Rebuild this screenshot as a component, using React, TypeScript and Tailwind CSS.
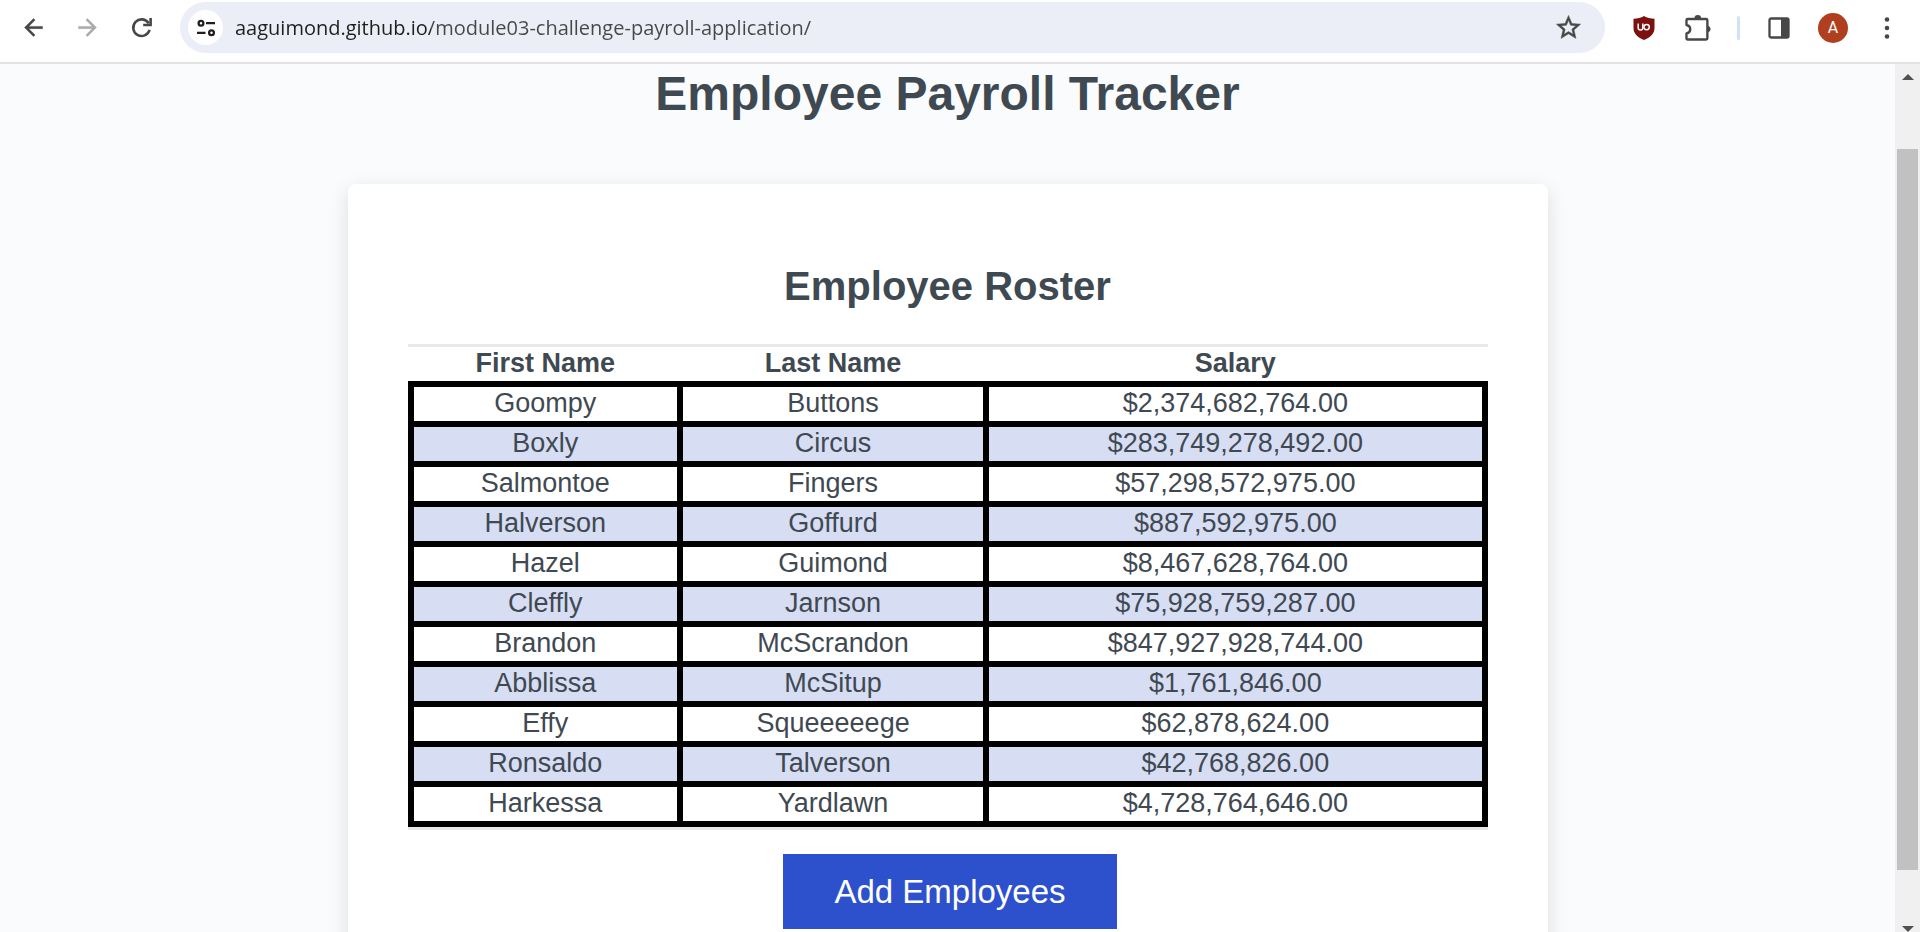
import type { ReactNode } from "react";

const employees = [
  ["Goompy", "Buttons", "$2,374,682,764.00"],
  ["Boxly", "Circus", "$283,749,278,492.00"],
  ["Salmontoe", "Fingers", "$57,298,572,975.00"],
  ["Halverson", "Goffurd", "$887,592,975.00"],
  ["Hazel", "Guimond", "$8,467,628,764.00"],
  ["Cleffly", "Jarnson", "$75,928,759,287.00"],
  ["Brandon", "McScrandon", "$847,927,928,744.00"],
  ["Abblissa", "McSitup", "$1,761,846.00"],
  ["Effy", "Squeeeeege", "$62,878,624.00"],
  ["Ronsaldo", "Talverson", "$42,768,826.00"],
  ["Harkessa", "Yardlawn", "$4,728,764,646.00"],
];

function ToolButton({ label, children }: { label: string; children: ReactNode }) {
  return (
    <button type="button" aria-label={label} className="flex h-12 w-[54px] shrink-0 items-center justify-center text-[#474747]">
      {children}
    </button>
  );
}

function Toolbar() {
  return (
    <header className="flex h-16 shrink-0 items-center border-b-2 border-[#e1e3e1] bg-white px-1.5 pb-[7px]">
      <ToolButton label="Back">
        <svg viewBox="0 0 24 24" className="size-[27px]" fill="currentColor" stroke="currentColor" strokeWidth="0.4">
          <path d="M20 11H7.83l5.59-5.59L12 4l-8 8 8 8 1.41-1.41L7.83 13H20z" />
        </svg>
      </ToolButton>
      <ToolButton label="Forward">
        <svg viewBox="0 0 24 24" className="size-[27px] text-[#ababab]" fill="currentColor" stroke="currentColor" strokeWidth="0.4">
          <path d="m12 4-1.41 1.41L16.17 11H4v2h12.17l-5.58 5.59L12 20l8-8z" />
        </svg>
      </ToolButton>
      <ToolButton label="Reload">
        <svg viewBox="0 0 24 24" className="size-[27px]" fill="none" stroke="currentColor" strokeWidth="2.3">
          <path d="M19.2 14.2A7.4 7.4 0 1 1 18.4 8.300" />
          <path d="M20.100 3.600V9.800h-6.600" />
        </svg>
      </ToolButton>

      <div className="ml-3 flex h-[51px] min-w-0 flex-1 items-center rounded-full bg-[#ebeef6] pl-2 pr-2.5">
        <button type="button" aria-label="View site information" className="flex size-[35px] shrink-0 items-center justify-center rounded-full bg-white">
          <svg viewBox="0 0 20 18" className="h-[18px] w-5" fill="none" stroke="#1f1f1f" strokeWidth="2.3">
            <circle cx="5" cy="4.2" r="2.4" />
            <path d="M10 4.2h9M1 13.8h8.500" />
            <circle cx="15.500" cy="13.800" r="2.400" />
          </svg>
        </button>
        <input
          type="text"
          aria-label="Address"
          defaultValue="aaguimond.github.io/module03-challenge-payroll-application/"
          className="ml-3 min-w-0 flex-1 bg-[linear-gradient(to_right,#1f1f1f_196px,#474747_196px)] bg-clip-text font-['Open_Sans','Noto_Sans',sans-serif] text-[20px] leading-7 text-transparent outline-none"
        />
        <ToolButton label="Bookmark this tab">
          <svg viewBox="0 0 24 24" className="size-[29px]" fill="currentColor" stroke="currentColor" strokeWidth="0.4">
            <path d="m22 9.24-7.19-.62L12 2 9.19 8.63 2 9.24l5.46 4.73L5.82 21 12 17.27 18.18 21l-1.63-7.03zM12 15.4l-3.76 2.27 1-4.28-3.32-2.88 4.38-.38L12 6.1l1.71 4.04 4.38.38-3.32 2.88 1 4.28z" />
          </svg>
        </ToolButton>
      </div>

      <div className="ml-3 flex items-center">
        <ToolButton label="uBlock Origin">
          <svg viewBox="0 0 22 24" className="h-6 w-[22px]">
            <path d="M11 0C8 2 4.500 2.700.5 2.700V12c0 6 4.500 9.500 10.500 12 6-2.500 10.500-6 10.500-12V2.700C17.500 2.700 14 2 11 0z" fill="#7b120f" />
            <g fill="none" stroke="#fff" strokeWidth="1.500">
              <path d="M5.200 7.500v4.300a2.300 2.300 0 0 0 4.600 0V7.500" />
              <circle cx="13.600" cy="11.100" r="2.700" />
            </g>
          </svg>
        </ToolButton>
        <ToolButton label="Extensions">
          <svg viewBox="0 0 26 26" className="size-7" fill="none" stroke="currentColor" strokeWidth="2.200" strokeLinejoin="round">
            <path d="M3.500 4.600H20.500q1.200 0 1.200 1.200V22.500q0 1.200-1.200 1.200H3.500q-1.200 0-1.200-1.200V18c2.400-.5 3.500-2 3.500-3.900S4.700 10.700 2.300 10.200V5.800q0-1.200 1.200-1.200z" />
            <path d="M9.700 4a3.100 3.100 0 0 1 6.200 0zM22.300 10.900a3.200 3.200 0 0 1 0 6.200z" fill="currentColor" stroke="none" />
          </svg>
        </ToolButton>
        <div className="mx-3 h-6 w-[3px] rounded-full bg-[#d3e0fb]" />
        <ToolButton label="Side panel">
          <svg viewBox="0 0 22 22" className="size-[22px]">
            <rect x="1.500" y="1.500" width="19" height="19" rx="1.500" fill="none" stroke="currentColor" strokeWidth="2.300" />
            <path d="M13 1h7.500v20H13z" fill="currentColor" />
          </svg>
        </ToolButton>
        <button type="button" aria-label="Profile" className="flex h-12 w-[54px] items-center justify-center">
          <span className="flex size-[30px] items-center justify-center rounded-full bg-[#b03f20] font-[Roboto,sans-serif] text-[16px] leading-none text-white">A</span>
        </button>
        <ToolButton label="Menu">
          <svg viewBox="0 0 6 24" className="h-6 w-1.5" fill="currentColor">
            <circle cx="3" cy="3.500" r="2.300" />
            <circle cx="3" cy="12" r="2.300" />
            <circle cx="3" cy="20.500" r="2.300" />
          </svg>
        </ToolButton>
      </div>
    </header>
  );
}

function Scrollbar() {
  return (
    <div className="flex w-[25px] shrink-0 flex-col items-center bg-[#f0f0f0]" aria-hidden="true">
      <svg viewBox="0 0 12 6" className="mt-2.5 h-1.5 w-3 shrink-0" fill="#505050">
        <path d="M6 0 12 6H0z" />
      </svg>
      <div className="mb-14 mt-[69px] w-[21px] flex-1 bg-[#c1c1c1]" />
      <svg viewBox="0 0 12 6" className="h-1.5 w-3 shrink-0" fill="#505050">
        <path d="M0 0h12L6 6z" />
      </svg>
    </div>
  );
}

export default function App() {
  return (
    <div className="flex h-screen flex-col overflow-hidden font-['Liberation_Sans',Arial,sans-serif] text-[#3f4952]">
      <Toolbar />
      <div className="flex min-h-0 flex-1">
        <main className="min-w-0 flex-1 overflow-hidden bg-[#fafbfd]">
          <h1 className="pt-1 text-center text-5xl font-bold leading-[52px]">Employee Payroll Tracker</h1>
          <section className="mx-auto mt-16 max-w-[1200px] rounded-lg bg-white px-[60px] pb-24 pt-[78px] shadow-[0_6px_20px_rgba(0,0,0,0.12)]">
            <h2 className="text-center text-[40px] font-bold leading-12">Employee Roster</h2>
            <div className="mt-[34px] border-y-[3px] border-[#e9e9e9]">
              <table className="w-full table-fixed border-collapse text-center text-[27px] leading-[31px]">
                <colgroup>
                  <col className="w-[25.1%]" />
                  <col className="w-[28.5%]" />
                  <col />
                </colgroup>
                <thead>
                  <tr>
                    <th className="h-[34px] pb-[2px] pt-px font-bold">First Name</th>
                    <th className="pb-[2px] pt-px font-bold">Last Name</th>
                    <th className="pb-[2px] pt-px font-bold">Salary</th>
                  </tr>
                </thead>
                <tbody>
                  {employees.map((row) => (
                    <tr key={row[0]} className="even:bg-[#d7ddf2]">
                      {row.map((cell) => (
                        <td key={cell} className="border-[6px] border-black pb-[2px] pt-px">{cell}</td>
                      ))}
                    </tr>
                  ))}
                </tbody>
              </table>
            </div>
            <div className="mt-6 flex justify-center pl-[5px]">
              <button type="button" className="h-[75px] bg-[#2d51cd] px-[51px] text-[33px] leading-10 text-white">Add Employees</button>
            </div>
          </section>
        </main>
        <Scrollbar />
      </div>
    </div>
  );
}
